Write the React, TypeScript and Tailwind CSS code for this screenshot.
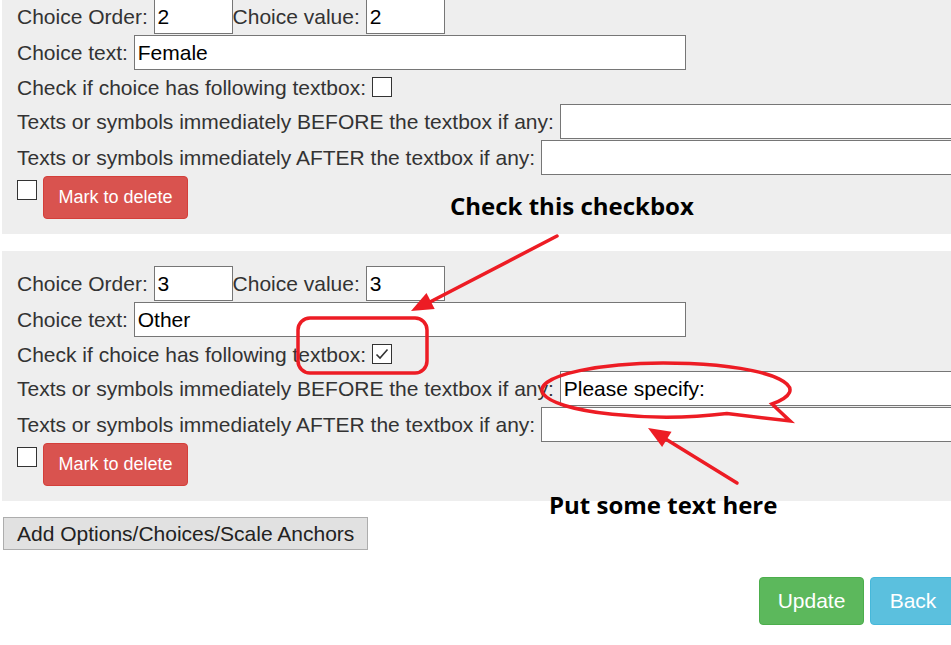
import React from "react";

const label = "text-[21px] leading-none text-[#333] whitespace-nowrap";
const inputBox =
  "h-[35px] border border-[#767676] bg-white px-[3px] text-[21px] leading-none text-black flex items-center whitespace-nowrap";

function Box({ checked = false }: { checked?: boolean }) {
  return (
    <span className="inline-flex h-[20px] w-[20px] shrink-0 items-center justify-center border border-[#333] bg-white">
      {checked && (
        <svg width="16" height="16" viewBox="0 0 16 16">
          <path d="M2.5 8.5 L6 12 L13.5 3.5" fill="none" stroke="#333" strokeWidth="1.6" />
        </svg>
      )}
    </span>
  );
}

function ChoicePanel({
  order,
  text,
  checked,
  before,
}: {
  order: string;
  text: string;
  checked?: boolean;
  before?: string;
}) {
  return (
    <div className="ml-[2px] bg-[#eeeeee] px-[15px] py-[15px]">
      <div className="flex h-[35px] items-center">
        <span className={label}>Choice Order:&nbsp;</span>
        <div className={`${inputBox} w-[79px]`}>{order}</div>
        <span className={label}>Choice value:&nbsp;</span>
        <div className={`${inputBox} w-[79px]`}>{order}</div>
      </div>
      <div className="mt-px flex h-[35px] items-center">
        <span className={label}>Choice text:&nbsp;</span>
        <div className={`${inputBox} w-[552px]`}>{text}</div>
      </div>
      <div className="flex h-[34px] items-center">
        <span className={label}>Check if choice has following textbox:&nbsp;</span>
        <Box checked={checked} />
      </div>
      <div className="flex h-[35px] items-center">
        <span className={label}>Texts or symbols immediately BEFORE the textbox if any:&nbsp;</span>
        <div className={`${inputBox} w-[420px]`}>{before}</div>
      </div>
      <div className="mt-px flex h-[35px] items-center">
        <span className={label}>Texts or symbols immediately AFTER the textbox if any:&nbsp;</span>
        <div className={`${inputBox} w-[420px]`}></div>
      </div>
      <div className="mt-px flex h-[43px] items-center gap-[6px]">
        <span className="-mt-[8px]">
          <Box />
        </span>
        <button className="h-[43px] w-[145px] rounded-[4px] border border-[#d43f3a] bg-[#d9534f] text-[18px] text-white">
          Mark to delete
        </button>
      </div>
    </div>
  );
}

export default function App() {
  return (
    <div
      className="relative h-[645px] w-[951px] overflow-hidden bg-white"
      style={{ fontFamily: '"Liberation Sans", Arial, sans-serif' }}
    >
      <div className="-mt-[16px] w-[1000px]">
        <ChoicePanel order="2" text="Female" />
        <div className="h-[17px]" />
        <ChoicePanel order="3" text="Other" checked before="Please specify:" />
        <button className="ml-[3px] mt-[16px] h-[33px] border border-[#adadad] bg-[#e1e1e1] px-[13px] text-[21px] leading-none text-[#222]">
          Add Options/Choices/Scale Anchors
        </button>
        <div className="ml-[759px] mt-[27px] flex gap-[6px]">
          <button className="h-[48px] w-[105px] rounded-[4px] border border-[#4cae4c] bg-[#5cb85c] text-[21px] text-white">
            Update
          </button>
          <button className="h-[48px] w-[86px] rounded-[4px] border border-[#46b8da] bg-[#5bc0de] text-[21px] text-white">
            Back
          </button>
        </div>
      </div>

      {/* annotations over the form */}
      <svg className="pointer-events-none absolute inset-0" width="951" height="645">
        <g stroke="#ed1c24" strokeWidth="3.5" fill="none" strokeLinecap="round">
          <line x1="557" y1="236" x2="428" y2="303" />
          <rect x="298" y="318" width="129" height="55" rx="12" />
          <path d="M772 404 A124 27 0 1 0 727 413.5 L790 421 Z" strokeLinejoin="miter" />
          <line x1="737" y1="483" x2="664" y2="438" />
        </g>
        <g fill="#ed1c24">
          <polygon points="411,311 434.7,309 426.5,293" />
          <polygon points="648,428 671.5,431.7 662.1,447.1" />
        </g>
      </svg>
      <div
        className="absolute left-[450px] top-[194px] text-[24px] font-bold leading-none text-black"
        style={{ fontFamily: '"Open Sans", "Noto Sans", sans-serif' }}
      >
        Check this checkbox
      </div>
      <div
        className="absolute left-[549px] top-[493px] text-[24px] font-bold leading-none text-black"
        style={{ fontFamily: '"Open Sans", "Noto Sans", sans-serif' }}
      >
        Put some text here
      </div>
    </div>
  );
}
